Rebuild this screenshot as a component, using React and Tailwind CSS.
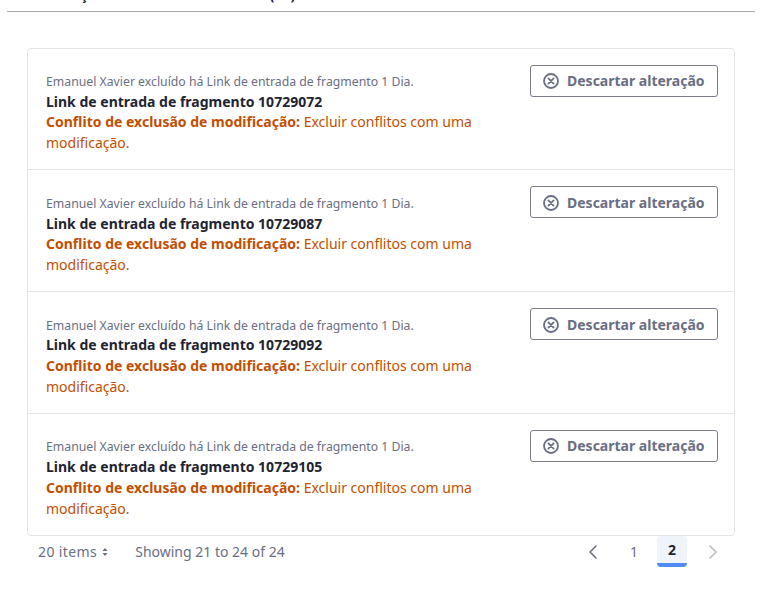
import { ChevronLeft, ChevronRight } from "lucide-react";

const rows = ["10729072", "10729087", "10729092", "10729105"];

function DiscardIcon() {
  return (
    <svg width="16" height="16" viewBox="0 0 16 16" fill="none" stroke="#6a6e83" strokeWidth="1.8" strokeLinecap="round">
      <circle cx="8" cy="8" r="7" />
      <path d="M5.4 5.4l5.2 5.2M10.6 5.4l-5.2 5.2" />
    </svg>
  );
}

function Row({ id, last }) {
  return (
    <div className={`flex items-start justify-between pl-[18px] pr-4 pt-4 h-[121.7px] ${last ? "" : "border-b border-[#e4e4e7]"}`}>
      <div className="w-[450px] pt-[8.93px]">
        <p className="text-[12.25px] leading-[18px] text-[#6a6e83]">Emanuel Xavier excluído há Link de entrada de fragmento 1 Dia.</p>
        <p className="mt-[1.67px] text-sm leading-[18.4px] font-bold text-[#1f2433]">Link de entrada de fragmento {id}</p>
        <p className="text-sm leading-[21px] text-[#c24f00]">
          <span className="font-bold">Conflito de exclusão de modificação:</span> Excluir conflitos com uma modificação.
        </p>
      </div>
      <button className="flex items-center gap-2 h-8 w-[188px] px-3 pt-[1.8px] border border-[#7d7b8a] rounded-[3px] text-sm font-bold text-[#6a6e83]">
        <DiscardIcon />
        Descartar alteração
      </button>
    </div>
  );
}

export default function App() {
  return (
    <div className="w-[768px] h-[597px] bg-white overflow-hidden font-['Noto_Sans',sans-serif]">
      <div className="ml-[7px] w-[748px] h-[28px] -mt-4 border-b border-[#a8a8b0] pl-[13px] text-sm leading-[21px] font-bold text-[#1f2433]">
        Modificações de exclusão e conflito (24)
      </div>
      <div className="ml-[27px] w-[708px] mt-[35.5px]">
        <div className="border border-[#e4e4e7] rounded-[4px]">
          {rows.map((id, i) => (
            <Row key={id} id={id} last={i === rows.length - 1} />
          ))}
        </div>
        <div className="flex items-center justify-between h-[31px] text-sm text-[#6a6e83]">
          <div className="flex items-center pl-[11px]">
            <span className="tracking-[0.4px]">20 items</span>
            <svg className="ml-[5px]" width="6" height="10" viewBox="0 0 6 10" fill="#6a6e83">
              <path d="M3 1l2.5 3h-5zM3 9L.5 6h5z" />
            </svg>
            <span className="ml-[27px]">Showing 21 to 24 of 24</span>
          </div>
          <div className="flex items-center pr-[10px]">
            <ChevronLeft size={24} strokeWidth={1.5} className="text-[#6a6e83] mr-[14px]" />
            <span className="w-[30px] text-center">1</span>
            <span className="ml-[8px] w-[30px] h-[31px] flex items-center justify-center font-bold text-[#1f2433] bg-[#eff4fc] border-b-4 border-[#4f8cf7] rounded-[4px]">2</span>
            <ChevronRight size={24} strokeWidth={1.5} className="text-[#b8b8c0] ml-[14px]" />
          </div>
        </div>
      </div>
    </div>
  );
}
